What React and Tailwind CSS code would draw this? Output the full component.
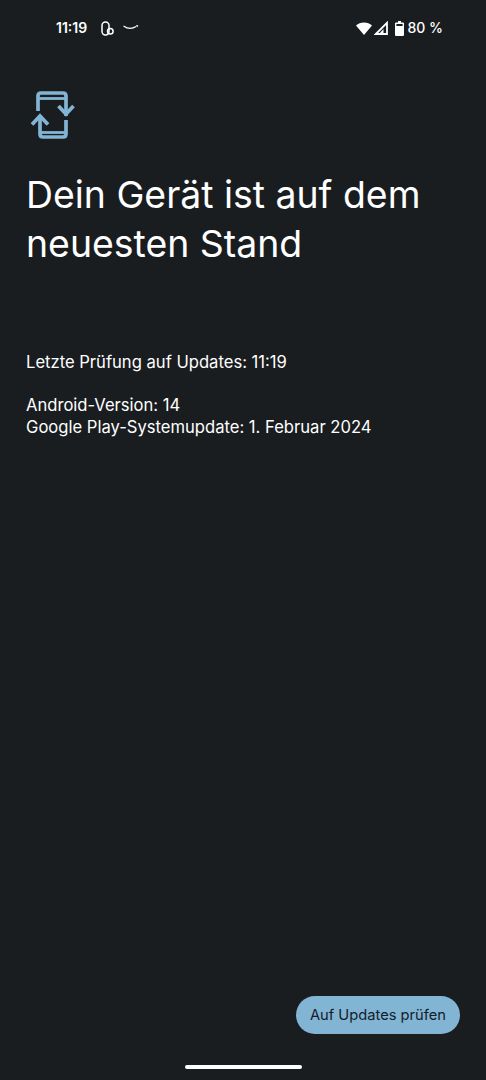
import React from 'react';

const sans = "font-['Inter',sans-serif]";

const AppIcon = () => (
  <svg width="46" height="52" viewBox="0 0 46 52" fill="none" stroke="#82b4d4" strokeWidth="3.7">
    <path d="M8 21V6Q8 3 11 3H33Q36 3 36 6V26" />
    <path d="M8 8.5H36" strokeWidth="2.8" />
    <path d="M28.5 16 36 24 43.5 16" />
    <path d="M10 26V44Q10 47 13 47H33Q36 47 36 44V30" />
    <path d="M10 42.5H36" strokeWidth="2.8" />
    <path d="M2 34.5 10 26 18 34.5" />
  </svg>
);

const StatusBar = () => (
  <div className={`flex items-center justify-between h-[56px] pl-[56px] pr-[43px] text-white ${sans}`}>
    <div className="flex items-center">
      <span className="text-[14px] font-semibold leading-none">11:19</span>
      <svg className="ml-[14px]" width="13" height="15" viewBox="0 0 13 15" fill="none" stroke="white" strokeWidth="1.5">
        <rect x="1" y="1" width="7" height="13" rx="3.4" />
        <circle cx="9.3" cy="10.2" r="2.8" />
      </svg>
      <svg className="ml-[9px]" width="16" height="8" viewBox="0 0 16 8" fill="none">
        <path d="M0.5 2Q7 6.5 13 2.5" stroke="white" strokeWidth="1.3" />
        <path d="M13 1 15.5 1.5 14 3.5Z" fill="white" />
      </svg>
    </div>
    <div className="flex items-center">
      <svg width="16" height="13" viewBox="0 0 16 13">
        <path d="M8 13 0 3.5Q3.2 0.5 8 0.5T16 3.5Z" fill="white" />
      </svg>
      <svg className="ml-[2px]" width="14" height="14" viewBox="0 0 14 14" fill="none" stroke="white" strokeWidth="1.8">
        <path d="M13 1.8V13H1.8Z" />
        <path d="M5 13 9.5 8V13Z" fill="white" stroke="none" />
      </svg>
      <svg className="ml-[7px]" width="9" height="15" viewBox="0 0 9 15">
        <path fillRule="evenodd" d="M3 0H6V1.5H8Q9 1.5 9 2.5V14Q9 15 8 15H1Q0 15 0 14V2.5Q0 1.5 1 1.5H3ZM1.4 2.9V5H7.6V2.9Z" fill="white" />
      </svg>
      <span className="ml-[4px] text-[14px] font-medium leading-none">80 %</span>
    </div>
  </div>
);

export default function App() {
  return (
    <div className={`relative flex flex-col w-[486px] h-[1080px] bg-[#1a1d20] ${sans}`}>
      <StatusBar />

      <div className="flex flex-col flex-1 pl-[30px] pr-[26px]">
        <div className="mt-[34px]">
          <AppIcon />
        </div>
        <h1 className="-ml-[4px] mt-[28px] text-[37.4px] leading-[49px] font-normal text-white">
          Dein Gerät ist auf dem<br />neuesten Stand
        </h1>
        <p className="-ml-[4px] mt-[83px] text-[16.6px] leading-[22px] text-white">Letzte Prüfung auf Updates: 11:19</p>
        <p className="-ml-[4px] mt-[21px] text-[16.6px] leading-[22px] text-white">Android-Version: 14</p>
        <p className="-ml-[4px] text-[16.6px] leading-[22px] text-white">Google Play-Systemupdate: 1. Februar 2024</p>
      </div>

      <div className="flex justify-end pr-[26px]">
        <button className="flex items-center justify-center w-[164px] h-[38px] rounded-full bg-[#82b4d4] text-[14.7px] font-normal text-[#12202b]">
          Auf Updates prüfen
        </button>
      </div>

      <div className="flex justify-center mt-[31px] mb-[11px]">
        <div className="w-[117px] h-[4px] rounded-full bg-white" />
      </div>
    </div>
  );
}
